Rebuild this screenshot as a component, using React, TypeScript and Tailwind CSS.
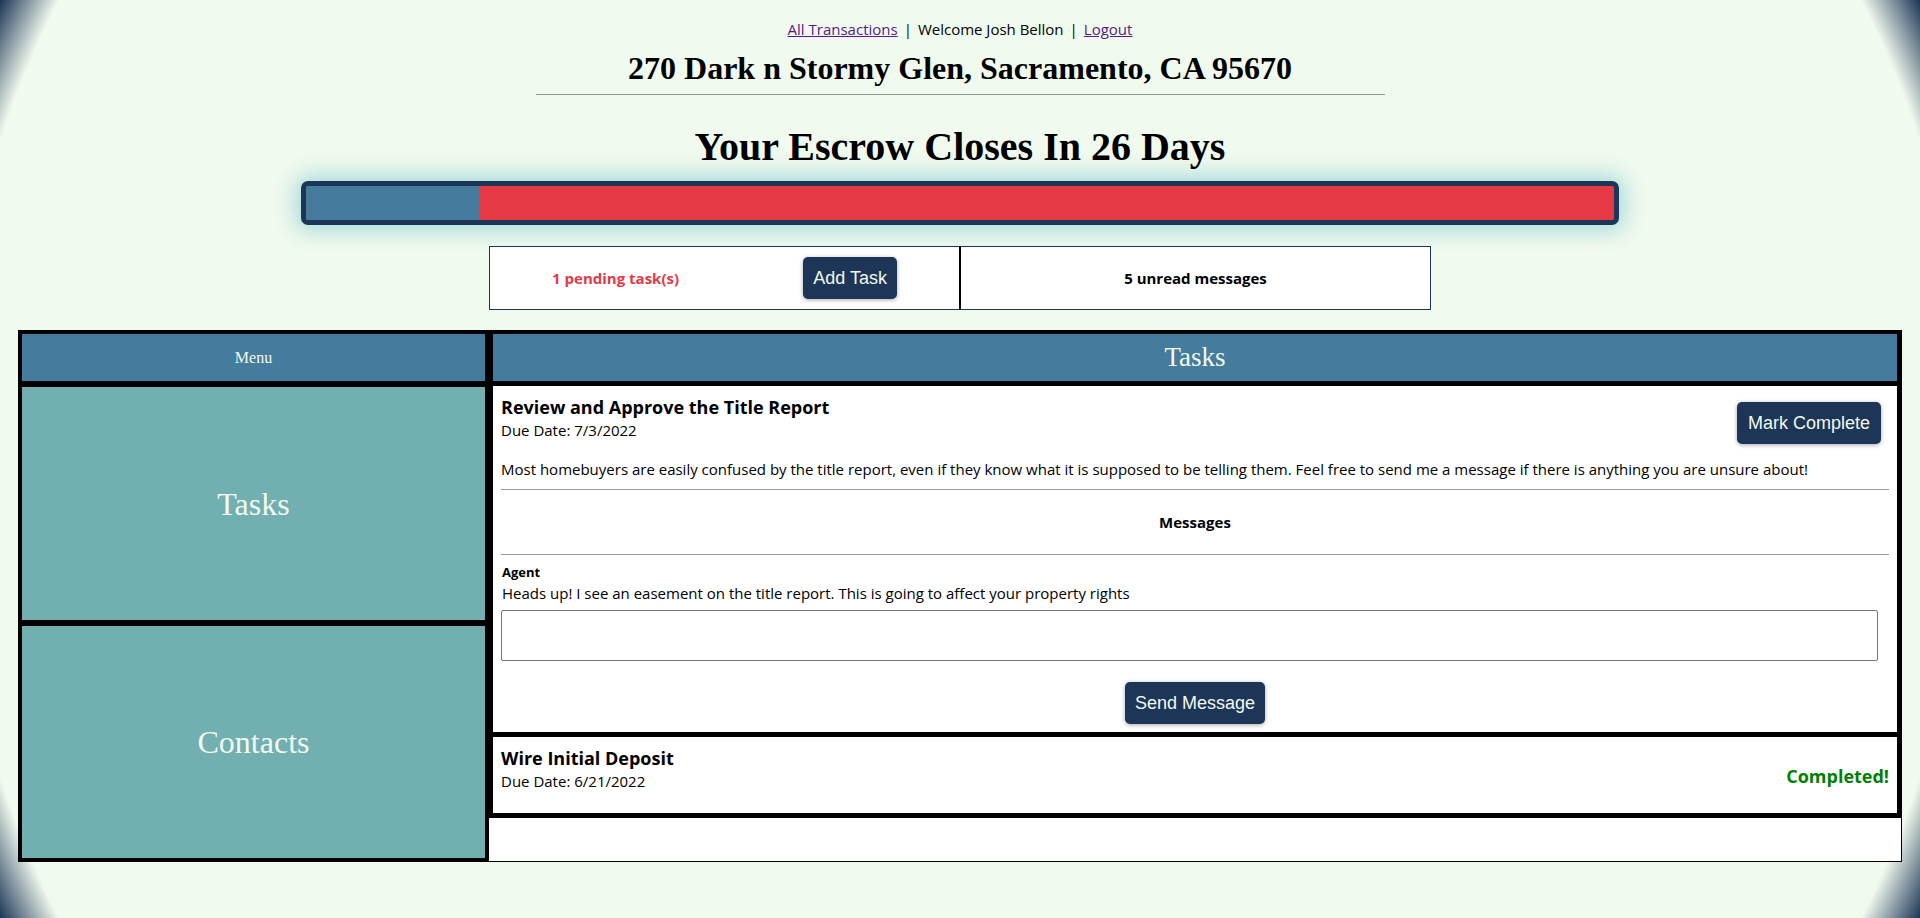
import React from 'react';

function NavButton({ label, className = '' }: { label: string; className?: string }) {
  return (
    <button
      className={`h-[42px] shrink-0 rounded-[5px] bg-[#1d3557] px-[10px] font-['Liberation_Sans',Arial,sans-serif] text-[18px] text-[#f1faee] shadow-[0_1px_4px_rgba(0,0,0,0.35)] ${className}`}
    >
      {label}
    </button>
  );
}

function TaskHeaderRow({
  title,
  due,
  right,
}: {
  title: string;
  due: string;
  right: React.ReactNode;
}) {
  return (
    <div className="flex items-start justify-between">
      <div>
        <h3 className="text-[18px] font-bold leading-[26px]">{title}</h3>
        <p className="text-[15px] leading-5">{due}</p>
      </div>
      {right}
    </div>
  );
}

export default function App() {
  return (
    <div className="min-h-screen bg-[radial-gradient(circle,#f1faee_95%,#1d3557)] pt-[18px] font-['Open_Sans',sans-serif] text-black">
      {/* top links */}
      <nav className="text-center text-[15px] leading-[22px]">
        <a href="#" className="text-[#551a8b] underline">
          All Transactions
        </a>
        <span className="mx-[6px]">|</span>
        <span>Welcome Josh Bellon</span>
        <span className="mx-[6px]">|</span>
        <a href="#" className="text-[#551a8b] underline">
          Logout
        </a>
      </nav>

      <h1 className="mt-[10px] text-center font-['Liberation_Serif',serif] text-[32px] font-bold leading-[37px]">
        270 Dark n Stormy Glen, Sacramento, CA 95670
      </h1>
      <hr className="mx-auto mt-[7px] w-[849px] border-t border-[#9a9a9a]" />

      <h2 className="mt-[29px] text-center font-['Liberation_Serif',serif] text-[40px] font-bold leading-[46px]">
        Your Escrow Closes In 26 Days
      </h2>

      {/* escrow progress */}
      <div className="mx-auto mt-[11px] flex h-[44px] w-[1318px] overflow-hidden rounded-[7px] border-[5px] border-[#1d3557] bg-[#e63946] shadow-[0_0_22px_6px_#a8dadc]">
        <div className="h-full w-[13.3%] bg-[#457b9d]" />
      </div>

      {/* summary */}
      <div className="mx-auto mt-[21px] flex h-[64px] w-[942px]">
        <div className="flex flex-1 items-center justify-around border border-[#1d3557] border-r-black bg-white">
          <span className="text-[15px] font-bold text-[#e63946]">1 pending task(s)</span>
          <NavButton label="Add Task" />
        </div>
        <div className="flex flex-1 items-center justify-center border border-[#1d3557] border-l-black bg-white">
          <span className="text-[15px] font-bold">5 unread messages</span>
        </div>
      </div>

      {/* main panel */}
      <div className="mx-[18px] mt-[20px] flex">
        <aside className="flex w-[471px] shrink-0 flex-col border-4 border-black font-['Liberation_Serif',serif] text-[#f1faee]">
          <div className="flex h-[47px] items-center justify-center bg-[#457b9d] text-[16px]">Menu</div>
          <div className="flex h-[239px] items-center justify-center border-t-[6px] border-black bg-[#71afb1] text-[32px]">
            Tasks
          </div>
          <div className="flex h-[238px] items-center justify-center border-t-[6px] border-black bg-[#71afb1] text-[32px]">
            Contacts
          </div>
        </aside>

        <section className="flex min-w-0 flex-1 flex-col border-b border-r border-black bg-white">
          <div className="flex h-[56px] items-center justify-center border-4 border-b-[5px] border-black bg-[#457b9d] font-['Liberation_Serif',serif] text-[27px] text-[#f1faee]">
            Tasks
          </div>

          <div className="border-x-4 border-b-[5px] border-black p-2">
            <TaskHeaderRow
              title="Review and Approve the Title Report"
              due="Due Date: 7/3/2022"
              right={<NavButton label="Mark Complete" className="m-2 px-[11px]" />}
            />
            <p className="mt-[7px] text-[15px] leading-5">
              Most homebuyers are easily confused by the title report, even if they know what it is supposed to be
              telling them. Feel free to send me a message if there is anything you are unsure about!
            </p>
            <hr className="mt-[10px] border-t border-[#9a9a9a]" />
            <div className="py-[22px] text-center text-[15px] font-bold leading-5">Messages</div>
            <hr className="border-t border-[#9a9a9a]" />
            <div className="mt-[9px] px-px text-[13px] font-bold leading-4">Agent</div>
            <p className="mt-[3px] px-px text-[15px] leading-5">
              Heads up! I see an easement on the title report. This is going to affect your property rights
            </p>
            <textarea className="mt-[7px] block h-[51px] w-[1377px] resize-none rounded-[2px] border border-[#767676] bg-white" />
            <div className="mt-[21px] flex justify-center">
              <NavButton label="Send Message" className="px-[9px]" />
            </div>
          </div>

          <div className="border-x-4 border-b-[5px] border-black p-2">
            <TaskHeaderRow
              title="Wire Initial Deposit"
              due="Due Date: 6/21/2022"
              right={
                <div className="mb-2 ml-2 mt-[10px] flex h-[42px] items-center text-[18px] font-bold text-[#008000]">
                  Completed!
                </div>
              }
            />
          </div>
        </section>
      </div>
    </div>
  );
}
